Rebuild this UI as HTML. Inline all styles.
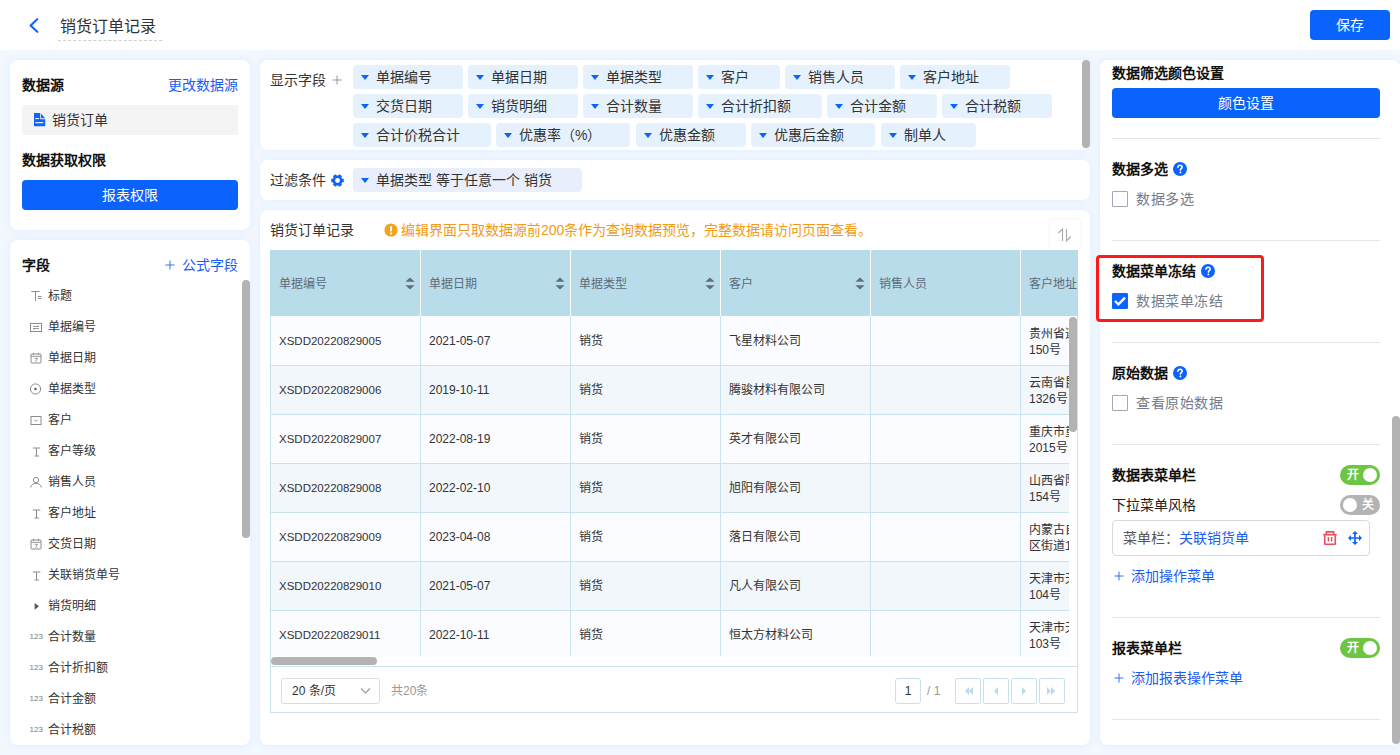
<!DOCTYPE html>
<html lang="zh-CN"><head><meta charset="utf-8">
<style>
*{box-sizing:border-box;margin:0;padding:0}
html,body{width:1400px;height:755px;overflow:hidden}
body{position:relative;background:#f3f7fe;font-family:"Liberation Sans",sans-serif;color:#333;font-size:14px}
.abs{position:absolute}
.hdr{left:0;top:0;width:1400px;height:50px;background:#fff}
.panel{position:absolute;background:#fff;border-radius:8px;box-shadow:0 0 10px rgba(0,150,255,.09)}
.t14{font-size:14px;line-height:20px;white-space:nowrap}
.t12{font-size:12px;line-height:16px;white-space:nowrap}
.b{font-weight:bold;color:#111}
.blue{color:#1a5cf5}
.btn{position:absolute;background:#0b63fe;color:#fff;border-radius:4px;text-align:center;font-size:14px}
/* field list */
.fl{position:absolute;left:31px;height:20px;width:200px}
.fl .ic{position:absolute;left:0;top:5px;width:11px;height:11px}
.fl .tx{position:absolute;left:17px;top:2px;font-size:12px;line-height:16px;color:#333;white-space:nowrap}
/* tags */
.tag{position:absolute;height:24px;background:#e5f2fe;border-radius:4px}
.tag i{position:absolute;left:8px;top:10px;width:0;height:0;border-left:4px solid transparent;border-right:4px solid transparent;border-top:5px solid #0b63fe}
.tag span{position:absolute;left:23px;top:2px;font-size:14px;line-height:20px;color:#333;white-space:nowrap}
/* table */
.th{position:absolute;top:250px;height:66px;background:#b9dcea}
.thx{position:absolute;top:26px;font-size:12px;line-height:16px;color:#5d6b7b;white-space:nowrap}
.sort{position:absolute;top:27px;width:10px;height:12px}
.row{position:absolute;left:271px;width:798px;height:49px}
.cell{position:absolute;top:0;height:49px;font-size:12px;line-height:16px;color:#333;white-space:nowrap}
.vl{position:absolute;width:1px;background:#c9e3ef}
.hl{position:absolute;height:1px;background:#c9e3ef}
.divr{position:absolute;left:1112px;width:268px;height:1px;background:#e6e6e6}
.cb{position:absolute;left:1112px;width:16px;height:16px;border:1px solid #a2a7b8;border-radius:1px;background:#fff}
.qm{position:absolute;width:14px;height:14px;border-radius:50%;background:#1c64f2;color:#fff;font-size:11px;line-height:14px;text-align:center;font-weight:bold}
.tog{position:absolute;left:1340px;width:40px;height:20px;border-radius:10px}
</style></head><body>

<!-- header -->
<div class="abs hdr"></div>
<svg class="abs" style="left:28px;top:17px" width="12" height="17" viewBox="0 0 12 17"><path d="M9.3 2.2 L2.6 8.5 L9.3 14.8" fill="none" stroke="#1560f8" stroke-width="2.1" stroke-linecap="round" stroke-linejoin="round"/></svg>
<div class="abs" style="left:60px;top:16px;font-size:16px;line-height:22px;color:#333;white-space:nowrap">销货订单记录</div>
<div class="abs" style="left:58px;top:40px;width:104px;height:0;border-top:1px dashed #cfcfcf"></div>
<div class="btn" style="left:1310px;top:10px;width:80px;height:30px;line-height:30px">保存</div>

<!-- left panel 1 -->
<div class="panel" style="left:10px;top:60px;width:240px;height:170px"></div>
<div class="abs t14 b" style="left:22px;top:75px">数据源</div>
<div class="abs t14 blue" style="left:168px;top:75px">更改数据源</div>
<div class="abs" style="left:22px;top:105px;width:216px;height:30px;background:#f4f4f5;border-radius:2px"></div>
<svg class="abs" style="left:34px;top:113px" width="12" height="14" viewBox="0 0 12 14"><path d="M0 0H6.2V6.2H11.2V13.2H0Z" fill="#0d63fe"/><path d="M7 0.6L11 5.2H7Z" fill="#0d63fe"/><rect x="1.3" y="5" width="3.6" height="1.1" fill="#fff"/><rect x="1.3" y="9.1" width="8" height="1.1" fill="#fff"/></svg>
<div class="abs t14" style="left:52px;top:110px;color:#333">销货订单</div>
<div class="abs t14 b" style="left:22px;top:150px">数据获取权限</div>
<div class="btn" style="left:22px;top:180px;width:216px;height:30px;line-height:30px">报表权限</div>

<!-- left panel 2 -->
<div class="panel" style="left:10px;top:240px;width:240px;height:505px"></div>
<div class="abs t14 b" style="left:22px;top:255px">字段</div>
<svg class="abs" style="left:165px;top:260px" width="10" height="10" viewBox="0 0 10 10"><path d="M5 0.5V9.5M0.5 5H9.5" stroke="#3b6ff5" stroke-width="1"/></svg><div class="abs t14 blue" style="left:182px;top:255px">公式字段</div>
<div class="abs" style="left:242px;top:280px;width:8px;height:258px;border-radius:4px;background:#b3b3b3"></div>
<svg class="abs" style="left:29px;top:289px" width="14" height="14" viewBox="0 0 14 14"><path d="M2.3 2.5H10.5M6.5 2.5V11.8M9 7.5H12.5M9 9.5H12.5" stroke="#8c8c8c" fill="none"/></svg>
<svg class="abs" style="left:29px;top:320px" width="14" height="14" viewBox="0 0 14 14"><rect x="1.5" y="3.5" width="11" height="8" stroke="#8c8c8c" fill="none"/><path d="M4 6.5H10L8.6 5.3M10 8.5H4L5.4 9.7" stroke="#8c8c8c" stroke-width="0.9" fill="none"/></svg>
<svg class="abs" style="left:29px;top:351px" width="14" height="14" viewBox="0 0 14 14"><rect x="2" y="3" width="10" height="9" rx="0.8" stroke="#8c8c8c" fill="none"/><path d="M2 5.3H12M4.5 1.8V4M9.5 1.8V4M5.6 7.3H8.4L6.6 10.8" stroke="#8c8c8c" stroke-width="0.9" fill="none"/></svg>
<svg class="abs" style="left:29px;top:382px" width="14" height="14" viewBox="0 0 14 14"><circle cx="6.5" cy="7" r="5.1" stroke="#8c8c8c" fill="none"/><circle cx="6.5" cy="7" r="1.3" fill="#666"/></svg>
<svg class="abs" style="left:29px;top:413px" width="14" height="14" viewBox="0 0 14 14"><rect x="2" y="3.5" width="10" height="8" stroke="#8c8c8c" fill="none"/><path d="M5.2 6.6L7 8.4L8.8 6.6" stroke="#8c8c8c" stroke-width="0.9" fill="none"/></svg>
<svg class="abs" style="left:29px;top:444px" width="14" height="14" viewBox="0 0 14 14"><path d="M3.9 4H11.3M7.5 4V12M5.5 12H10" stroke="#8c8c8c" fill="none"/></svg>
<svg class="abs" style="left:29px;top:475px" width="14" height="14" viewBox="0 0 14 14"><circle cx="7" cy="5" r="2.6" stroke="#8c8c8c" fill="none"/><path d="M1.6 12.5C2.2 9.5 4.4 8.4 7 8.4S11.8 9.5 12.4 12.5" stroke="#8c8c8c" fill="none"/></svg>
<svg class="abs" style="left:29px;top:506px" width="14" height="14" viewBox="0 0 14 14"><path d="M3.9 4H11.3M7.5 4V12M5.5 12H10" stroke="#8c8c8c" fill="none"/></svg>
<svg class="abs" style="left:29px;top:537px" width="14" height="14" viewBox="0 0 14 14"><rect x="2" y="3" width="10" height="9" rx="0.8" stroke="#8c8c8c" fill="none"/><path d="M2 5.3H12M4.5 1.8V4M9.5 1.8V4M5.6 7.3H8.4L6.6 10.8" stroke="#8c8c8c" stroke-width="0.9" fill="none"/></svg>
<svg class="abs" style="left:29px;top:568px" width="14" height="14" viewBox="0 0 14 14"><path d="M3.9 4H11.3M7.5 4V12M5.5 12H10" stroke="#8c8c8c" fill="none"/></svg>
<svg class="abs" style="left:29px;top:599px" width="14" height="14" viewBox="0 0 14 14"><path d="M5.6 3.9L10 7.35L5.6 10.8Z" fill="#555"/></svg>
<div class="abs" style="left:29.5px;top:632px;font-size:8px;line-height:10px;color:#7a7a7a">123</div>
<div class="abs" style="left:29.5px;top:663px;font-size:8px;line-height:10px;color:#7a7a7a">123</div>
<div class="abs" style="left:29.5px;top:694px;font-size:8px;line-height:10px;color:#7a7a7a">123</div>
<div class="abs" style="left:29.5px;top:725px;font-size:8px;line-height:10px;color:#7a7a7a">123</div>
<div class="abs t12" style="left:48px;top:288px;color:#333">标题</div>
<div class="abs t12" style="left:48px;top:319px;color:#333">单据编号</div>
<div class="abs t12" style="left:48px;top:350px;color:#333">单据日期</div>
<div class="abs t12" style="left:48px;top:381px;color:#333">单据类型</div>
<div class="abs t12" style="left:48px;top:412px;color:#333">客户</div>
<div class="abs t12" style="left:48px;top:443px;color:#333">客户等级</div>
<div class="abs t12" style="left:48px;top:474px;color:#333">销售人员</div>
<div class="abs t12" style="left:48px;top:505px;color:#333">客户地址</div>
<div class="abs t12" style="left:48px;top:536px;color:#333">交货日期</div>
<div class="abs t12" style="left:48px;top:567px;color:#333">关联销货单号</div>
<div class="abs t12" style="left:48px;top:598px;color:#333">销货明细</div>
<div class="abs t12" style="left:48px;top:629px;color:#333">合计数量</div>
<div class="abs t12" style="left:48px;top:660px;color:#333">合计折扣额</div>
<div class="abs t12" style="left:48px;top:691px;color:#333">合计金额</div>
<div class="abs t12" style="left:48px;top:722px;color:#333">合计税额</div>

<!-- display fields panel -->
<div class="panel" style="left:260px;top:60px;width:830px;height:90px"></div>
<div class="abs t14" style="left:270px;top:70px;color:#333">显示字段</div>
<svg class="abs" style="left:332px;top:75px" width="10" height="10" viewBox="0 0 10 10"><path d="M5 0.5V9.5M0.5 5H9.5" stroke="#999" stroke-width="1"/></svg>
<div class="tag" style="left:353px;top:65px;width:110px"><i></i><span>单据编号</span></div>
<div class="tag" style="left:468px;top:65px;width:110px"><i></i><span>单据日期</span></div>
<div class="tag" style="left:583px;top:65px;width:110px"><i></i><span>单据类型</span></div>
<div class="tag" style="left:698px;top:65px;width:82px"><i></i><span>客户</span></div>
<div class="tag" style="left:785px;top:65px;width:110px"><i></i><span>销售人员</span></div>
<div class="tag" style="left:900px;top:65px;width:110px"><i></i><span>客户地址</span></div>
<div class="tag" style="left:353px;top:94px;width:110px"><i></i><span>交货日期</span></div>
<div class="tag" style="left:468px;top:94px;width:110px"><i></i><span>销货明细</span></div>
<div class="tag" style="left:583px;top:94px;width:110px"><i></i><span>合计数量</span></div>
<div class="tag" style="left:698px;top:94px;width:124px"><i></i><span>合计折扣额</span></div>
<div class="tag" style="left:827px;top:94px;width:110px"><i></i><span>合计金额</span></div>
<div class="tag" style="left:942px;top:94px;width:110px"><i></i><span>合计税额</span></div>
<div class="tag" style="left:353px;top:123px;width:138px"><i></i><span>合计价税合计</span></div>
<div class="tag" style="left:496px;top:123px;width:134px"><i></i><span>优惠率（%）</span></div>
<div class="tag" style="left:636px;top:123px;width:110px"><i></i><span>优惠金额</span></div>
<div class="tag" style="left:751px;top:123px;width:124px"><i></i><span>优惠后金额</span></div>
<div class="tag" style="left:881px;top:123px;width:95px"><i></i><span>制单人</span></div>
<div class="abs" style="left:1082px;top:60px;width:8px;height:88px;border-radius:4px;background:#b3b3b3"></div>
<!-- filter panel -->
<div class="panel" style="left:260px;top:160px;width:830px;height:40px"></div>
<div class="abs t14" style="left:270px;top:170px;color:#333">过滤条件</div>
<svg class="abs" style="left:331px;top:174px" width="13" height="13" viewBox="0 0 13 13"><path fill="#0e63fd" fill-rule="evenodd" d="M11.17 8.29 L12.78 8.18 L12.78 4.82 L11.17 4.71 L10.39 3.35 L11.10 1.90 L8.18 0.22 L7.28 1.56 L5.72 1.56 L4.82 0.22 L1.90 1.90 L2.61 3.35 L1.83 4.71 L0.22 4.82 L0.22 8.18 L1.83 8.29 L2.61 9.65 L1.90 11.10 L4.82 12.78 L5.72 11.44 L7.28 11.44 L8.18 12.78 L11.10 11.10 L10.39 9.65Z M6.5 4.1 A2.4 2.4 0 1 0 6.5 8.9 A2.4 2.4 0 1 0 6.5 4.1Z"/></svg>
<div class="tag" style="left:353px;top:168px;width:229px;background:#e8eefb"><i></i><span>单据类型 等于任意一个 销货</span></div>
<!-- table panel -->
<div class="panel" style="left:260px;top:210px;width:830px;height:535px"></div>
<div class="abs t14" style="left:270px;top:220px;color:#333">销货订单记录</div>
<svg class="abs" style="left:384px;top:223px" width="14" height="14" viewBox="0 0 14 14"><circle cx="7" cy="7" r="6.6" fill="#f7a21b"/><rect x="6" y="3" width="2" height="5.5" rx="1" fill="#fff"/><circle cx="7" cy="10.5" r="1.1" fill="#fff"/></svg>
<div class="abs t14" style="left:401px;top:220px;color:#f29a16">编辑界面只取数据源前200条作为查询数据预览，完整数据请访问页面查看。</div>
<div class="abs" style="left:1050px;top:220px;width:30px;height:30px;background:#fff;box-shadow:0 0 4px rgba(60,0,120,.07)"></div>
<svg class="abs" style="left:1055px;top:227px" width="20" height="16" viewBox="0 0 20 16"><path d="M7.5 14V2L3.2 6.2M11.5 2V14L15.8 9.5" stroke="#a8a8a8" stroke-width="1.1" fill="none"/></svg>
<div class="abs" style="left:270px;top:250px;width:808px;height:463px;border:1px solid #c9e3ef"></div>
<div class="abs" style="left:270px;top:250px;width:808px;height:66px;background:#b9dcea"></div>
<div class="abs" style="left:271px;top:250px;width:806px;height:66px;overflow:hidden">
<div class="thx" style="left:8px">单据编号</div>
<svg class="abs" style="left:134px;top:27px" width="10" height="13" viewBox="0 0 10 13"><path d="M5 0.6L9.6 4.8H0.4Z M5 12.4L9.6 8.2H0.4Z" fill="#5f6e82"/></svg>
<div class="thx" style="left:158px">单据日期</div>
<svg class="abs" style="left:284px;top:27px" width="10" height="13" viewBox="0 0 10 13"><path d="M5 0.6L9.6 4.8H0.4Z M5 12.4L9.6 8.2H0.4Z" fill="#5f6e82"/></svg>
<div class="thx" style="left:308px">单据类型</div>
<svg class="abs" style="left:434px;top:27px" width="10" height="13" viewBox="0 0 10 13"><path d="M5 0.6L9.6 4.8H0.4Z M5 12.4L9.6 8.2H0.4Z" fill="#5f6e82"/></svg>
<div class="thx" style="left:458px">客户</div>
<svg class="abs" style="left:584px;top:27px" width="10" height="13" viewBox="0 0 10 13"><path d="M5 0.6L9.6 4.8H0.4Z M5 12.4L9.6 8.2H0.4Z" fill="#5f6e82"/></svg>
<div class="thx" style="left:608px">销售人员</div>
<div class="thx" style="left:758px">客户地址</div>
<div class="abs" style="left:149px;top:0;width:1px;height:66px;background:#fff"></div>
<div class="abs" style="left:299px;top:0;width:1px;height:66px;background:#fff"></div>
<div class="abs" style="left:449px;top:0;width:1px;height:66px;background:#fff"></div>
<div class="abs" style="left:599px;top:0;width:1px;height:66px;background:#fff"></div>
<div class="abs" style="left:749px;top:0;width:1px;height:66px;background:#fff"></div>
</div>
<div class="abs" style="left:271px;top:250px;width:798px;height:406px;overflow:hidden">
<div class="abs" style="left:0;top:66px;width:808px;height:49px;background:#fafcff"></div>
<div class="abs t12" style="left:8px;top:83px;font-size:11.5px">XSDD20220829005</div>
<div class="abs t12" style="left:158px;top:83px">2021-05-07</div>
<div class="abs t12" style="left:308px;top:83px">销货</div>
<div class="abs t12" style="left:458px;top:83px">飞星材料公司</div>
<div class="abs t12" style="left:758px;top:76px;line-height:16px;width:40px;overflow:hidden">贵州省遵<br>150号</div>
<div class="abs" style="left:0;top:115px;width:808px;height:49px;background:#f1f7fb"></div>
<div class="abs t12" style="left:8px;top:132px;font-size:11.5px">XSDD20220829006</div>
<div class="abs t12" style="left:158px;top:132px">2019-10-11</div>
<div class="abs t12" style="left:308px;top:132px">销货</div>
<div class="abs t12" style="left:458px;top:132px">腾骏材料有限公司</div>
<div class="abs t12" style="left:758px;top:125px;line-height:16px;width:40px;overflow:hidden">云南省昆<br>1326号</div>
<div class="abs" style="left:0;top:164px;width:808px;height:49px;background:#fafcff"></div>
<div class="abs t12" style="left:8px;top:181px;font-size:11.5px">XSDD20220829007</div>
<div class="abs t12" style="left:158px;top:181px">2022-08-19</div>
<div class="abs t12" style="left:308px;top:181px">销货</div>
<div class="abs t12" style="left:458px;top:181px">英才有限公司</div>
<div class="abs t12" style="left:758px;top:174px;line-height:16px;width:40px;overflow:hidden">重庆市重<br>2015号</div>
<div class="abs" style="left:0;top:213px;width:808px;height:49px;background:#f1f7fb"></div>
<div class="abs t12" style="left:8px;top:230px;font-size:11.5px">XSDD20220829008</div>
<div class="abs t12" style="left:158px;top:230px">2022-02-10</div>
<div class="abs t12" style="left:308px;top:230px">销货</div>
<div class="abs t12" style="left:458px;top:230px">旭阳有限公司</div>
<div class="abs t12" style="left:758px;top:223px;line-height:16px;width:40px;overflow:hidden">山西省阳<br>154号</div>
<div class="abs" style="left:0;top:262px;width:808px;height:49px;background:#fafcff"></div>
<div class="abs t12" style="left:8px;top:279px;font-size:11.5px">XSDD20220829009</div>
<div class="abs t12" style="left:158px;top:279px">2023-04-08</div>
<div class="abs t12" style="left:308px;top:279px">销货</div>
<div class="abs t12" style="left:458px;top:279px">落日有限公司</div>
<div class="abs t12" style="left:758px;top:272px;line-height:16px;width:40px;overflow:hidden">内蒙古自<br>区街道1</div>
<div class="abs" style="left:0;top:311px;width:808px;height:49px;background:#f1f7fb"></div>
<div class="abs t12" style="left:8px;top:328px;font-size:11.5px">XSDD20220829010</div>
<div class="abs t12" style="left:158px;top:328px">2021-05-07</div>
<div class="abs t12" style="left:308px;top:328px">销货</div>
<div class="abs t12" style="left:458px;top:328px">凡人有限公司</div>
<div class="abs t12" style="left:758px;top:321px;line-height:16px;width:40px;overflow:hidden">天津市天<br>104号</div>
<div class="abs" style="left:0;top:360px;width:808px;height:49px;background:#fafcff"></div>
<div class="abs t12" style="left:8px;top:377px;font-size:11.5px">XSDD20220829011</div>
<div class="abs t12" style="left:158px;top:377px">2022-10-11</div>
<div class="abs t12" style="left:308px;top:377px">销货</div>
<div class="abs t12" style="left:458px;top:377px">恒太方材料公司</div>
<div class="abs t12" style="left:758px;top:370px;line-height:16px;width:40px;overflow:hidden">天津市天<br>103号</div>
<div class="abs" style="left:149px;top:66px;width:1px;height:400px;background:#c9e3ef"></div>
<div class="abs" style="left:299px;top:66px;width:1px;height:400px;background:#c9e3ef"></div>
<div class="abs" style="left:449px;top:66px;width:1px;height:400px;background:#c9e3ef"></div>
<div class="abs" style="left:599px;top:66px;width:1px;height:400px;background:#c9e3ef"></div>
<div class="abs" style="left:749px;top:66px;width:1px;height:400px;background:#c9e3ef"></div>
<div class="abs" style="left:0;top:115px;width:808px;height:1px;background:#c9e3ef"></div>
<div class="abs" style="left:0;top:164px;width:808px;height:1px;background:#c9e3ef"></div>
<div class="abs" style="left:0;top:213px;width:808px;height:1px;background:#c9e3ef"></div>
<div class="abs" style="left:0;top:262px;width:808px;height:1px;background:#c9e3ef"></div>
<div class="abs" style="left:0;top:311px;width:808px;height:1px;background:#c9e3ef"></div>
<div class="abs" style="left:0;top:360px;width:808px;height:1px;background:#c9e3ef"></div>
</div>
<div class="abs" style="left:1069px;top:316px;width:8px;height:340px;background:#fff"></div>
<div class="abs" style="left:1069px;top:317px;width:8px;height:115px;border-radius:4px;background:#b3b3b3"></div>
<div class="abs" style="left:271px;top:656px;width:806px;height:10px;background:#fff"></div>
<div class="abs" style="left:271px;top:657px;width:106px;height:8px;border-radius:4px;background:#b3b3b3"></div>
<div class="abs" style="left:271px;top:666px;width:806px;height:1px;background:#c9e3ef"></div>
<div class="abs" style="left:281px;top:678px;width:99px;height:26px;border:1px solid #dcdcdc;border-radius:3px;background:#fff"></div>
<div class="abs t12" style="left:292px;top:683px;color:#333">20 条/页</div>
<svg class="abs" style="left:360px;top:687px" width="11" height="8" viewBox="0 0 11 8"><path d="M1 1.5L5.5 6L10 1.5" stroke="#999" stroke-width="1.1" fill="none"/></svg>
<div class="abs t12" style="left:391px;top:683px;color:#999">共20条</div>
<div class="abs" style="left:895px;top:678px;width:26px;height:26px;border:1px solid #c5e1ed;border-radius:3px;background:#fff;text-align:center;font-size:12px;line-height:24px;color:#333">1</div>
<div class="abs t12" style="left:927px;top:683px;color:#999">/ 1</div>
<div class="abs" style="left:955px;top:678px;width:26px;height:26px;border:1px solid #c5e1ed;border-radius:2px;background:#fff"></div>
<svg class="abs" style="left:960px;top:683px" width="16" height="16" viewBox="0 0 16 16"><path d="M9 4L5 8L9 12Z M13 4L9 8L13 12Z" fill="#b7dcea"/></svg>
<div class="abs" style="left:983px;top:678px;width:26px;height:26px;border:1px solid #c5e1ed;border-radius:2px;background:#fff"></div>
<svg class="abs" style="left:988px;top:683px" width="16" height="16" viewBox="0 0 16 16"><path d="M10 4L6 8L10 12Z" fill="#b7dcea"/></svg>
<div class="abs" style="left:1011px;top:678px;width:26px;height:26px;border:1px solid #c5e1ed;border-radius:2px;background:#fff"></div>
<svg class="abs" style="left:1016px;top:683px" width="16" height="16" viewBox="0 0 16 16"><path d="M6 4L10 8L6 12Z" fill="#b7dcea"/></svg>
<div class="abs" style="left:1039px;top:678px;width:26px;height:26px;border:1px solid #c5e1ed;border-radius:2px;background:#fff"></div>
<svg class="abs" style="left:1044px;top:683px" width="16" height="16" viewBox="0 0 16 16"><path d="M3 4L7 8L3 12Z M7 4L11 8L7 12Z" fill="#b7dcea"/></svg>
<!-- right panel -->
<div class="panel" style="left:1100px;top:60px;width:300px;height:685px;border-radius:8px"></div>
<div class="abs t14 b" style="left:1112px;top:63px">数据筛选颜色设置</div>
<div class="btn" style="left:1112px;top:88px;width:268px;height:30px;line-height:30px">颜色设置</div>
<div class="divr" style="top:138px"></div>
<div class="abs t14 b" style="left:1112px;top:159px">数据多选</div>
<svg class="abs" style="left:1173px;top:162px" width="14" height="14" viewBox="0 0 14 14"><circle cx="7" cy="7" r="7" fill="#0b62fe"/><path d="M4.9 5.3C4.9 4.1 5.8 3.3 7 3.3S9.1 4.1 9.1 5.2C9.1 6.5 7.4 6.7 7.4 8.1" stroke="#fff" stroke-width="1.6" fill="none" stroke-linecap="round"/><circle cx="7.4" cy="10.4" r="0.95" fill="#fff"/></svg>
<div class="cb" style="top:191px"></div>
<div class="abs t14" style="left:1136px;top:189px;color:#747b8a;letter-spacing:0.6px">数据多选</div>
<div class="divr" style="top:240px"></div>
<div class="abs t14 b" style="left:1112px;top:261px">数据菜单冻结</div>
<svg class="abs" style="left:1201px;top:264px" width="14" height="14" viewBox="0 0 14 14"><circle cx="7" cy="7" r="7" fill="#0b62fe"/><path d="M4.9 5.3C4.9 4.1 5.8 3.3 7 3.3S9.1 4.1 9.1 5.2C9.1 6.5 7.4 6.7 7.4 8.1" stroke="#fff" stroke-width="1.6" fill="none" stroke-linecap="round"/><circle cx="7.4" cy="10.4" r="0.95" fill="#fff"/></svg>
<div class="cb" style="top:293px;background:#0d63fe;border-color:#0d63fe"></div>
<svg class="abs" style="left:1112px;top:293px" width="16" height="16" viewBox="0 0 16 16"><path d="M3 8L6.4 11.3L13 4.6" stroke="#fff" stroke-width="2.3" fill="none"/></svg>
<div class="abs t14" style="left:1136px;top:291px;color:#747b8a;letter-spacing:0.6px">数据菜单冻结</div>
<div class="abs" style="left:1096px;top:255px;width:168px;height:67px;border:3px solid #fe1a1a;border-radius:4px"></div>
<div class="divr" style="top:342px"></div>
<div class="abs t14 b" style="left:1112px;top:363px">原始数据</div>
<svg class="abs" style="left:1173px;top:366px" width="14" height="14" viewBox="0 0 14 14"><circle cx="7" cy="7" r="7" fill="#0b62fe"/><path d="M4.9 5.3C4.9 4.1 5.8 3.3 7 3.3S9.1 4.1 9.1 5.2C9.1 6.5 7.4 6.7 7.4 8.1" stroke="#fff" stroke-width="1.6" fill="none" stroke-linecap="round"/><circle cx="7.4" cy="10.4" r="0.95" fill="#fff"/></svg>
<div class="cb" style="top:395px"></div>
<div class="abs t14" style="left:1136px;top:393px;color:#747b8a;letter-spacing:0.6px">查看原始数据</div>
<div class="divr" style="top:444px"></div>
<div class="abs t14 b" style="left:1112px;top:465px">数据表菜单栏</div>
<div class="tog" style="top:465px;background:#6cc644"></div>
<div class="abs" style="left:1363px;top:468px;width:14px;height:14px;border-radius:50%;background:#fff"></div>
<div class="abs" style="left:1347px;top:467px;font-size:12px;line-height:16px;color:#fff;font-weight:bold">开</div>
<div class="abs t14" style="left:1112px;top:495px;color:#222">下拉菜单风格</div>
<div class="tog" style="top:495px;background:#b3b3b3"></div>
<div class="abs" style="left:1343px;top:498px;width:14px;height:14px;border-radius:50%;background:#fff"></div>
<div class="abs" style="left:1362px;top:497px;font-size:12px;line-height:16px;color:#fff;font-weight:bold">关</div>
<div class="abs" style="left:1112px;top:520px;width:258px;height:36px;border:1px solid #d9d9d9;border-radius:4px"></div>
<div class="abs t14" style="left:1123px;top:528px;color:#555">菜单栏：<span style="color:#1a5cf5">关联销货单</span></div>
<svg class="abs" style="left:1323px;top:531px" width="14" height="14" viewBox="0 0 14 14"><path d="M0.3 3.7H13.7" stroke="#e64d5e" stroke-width="1.7"/><path d="M3.4 3.4V0.9H10.6V3.4" stroke="#e64d5e" stroke-width="1.6" fill="none"/><path d="M1.7 4.2V12.6Q1.7 13.4 2.5 13.4H11.5Q12.3 13.4 12.3 12.6V4.2" stroke="#e64d5e" stroke-width="1.6" fill="none"/><path d="M5.4 6V10.6M8.6 6V10.6" stroke="#e64d5e" stroke-width="1.5"/></svg>
<svg class="abs" style="left:1348px;top:531px" width="14" height="14" viewBox="0 0 14 14"><path d="M7 2V12M2 7H12" stroke="#0d63fe" stroke-width="1.7"/><path d="M7 0L10 3H4Z M7 14L10 11H4Z M0 7L3 4V10Z M14 7L11 4V10Z" fill="#0d63fe"/></svg>
<svg class="abs" style="left:1114px;top:571px" width="10" height="10" viewBox="0 0 10 10"><path d="M5 0.5V9.5M0.5 5H9.5" stroke="#3b6ff5" stroke-width="1"/></svg><div class="abs t14 blue" style="left:1131px;top:566px">添加操作菜单</div>
<div class="divr" style="top:617px"></div>
<div class="abs t14 b" style="left:1112px;top:638px">报表菜单栏</div>
<div class="tog" style="top:638px;background:#6cc644"></div>
<div class="abs" style="left:1363px;top:641px;width:14px;height:14px;border-radius:50%;background:#fff"></div>
<div class="abs" style="left:1347px;top:640px;font-size:12px;line-height:16px;color:#fff;font-weight:bold">开</div>
<svg class="abs" style="left:1114px;top:673px" width="10" height="10" viewBox="0 0 10 10"><path d="M5 0.5V9.5M0.5 5H9.5" stroke="#3b6ff5" stroke-width="1"/></svg><div class="abs t14 blue" style="left:1131px;top:668px">添加报表操作菜单</div>
<div class="divr" style="top:719px"></div>
<div class="abs" style="left:1392px;top:416px;width:8px;height:328px;border-radius:4px;background:#b3b3b3"></div>
</body></html>
